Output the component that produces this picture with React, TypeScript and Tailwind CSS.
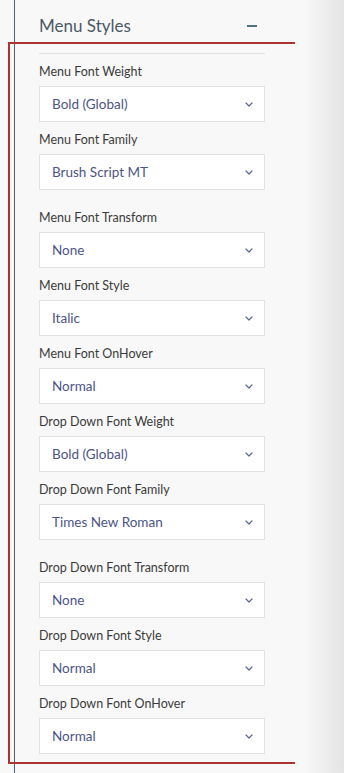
import React from "react";

interface Field {
  label: string;
  value: string;
  extra?: boolean;
}

const fields: Field[] = [
  { label: "Menu Font Weight", value: "Bold (Global)" },
  { label: "Menu Font Family", value: "Brush Script MT", extra: true },
  { label: "Menu Font Transform", value: "None" },
  { label: "Menu Font Style", value: "Italic" },
  { label: "Menu Font OnHover", value: "Normal" },
  { label: "Drop Down Font Weight", value: "Bold (Global)" },
  { label: "Drop Down Font Family", value: "Times New Roman", extra: true },
  { label: "Drop Down Font Transform", value: "None" },
  { label: "Drop Down Font Style", value: "Normal" },
  { label: "Drop Down Font OnHover", value: "Normal" },
];

const Chevron = () => (
  <svg width="8" height="5" viewBox="0 0 8 5" fill="none">
    <polyline
      points="1,1 4,4 7,1"
      stroke="#5d6699"
      strokeWidth="1.2"
      strokeLinecap="round"
      strokeLinejoin="round"
    />
  </svg>
);

const SelectField = ({ label, value, extra }: Field) => (
  <div className={extra ? "mb-[20px]" : "mb-[10px]"}>
    <div className="h-[16px] text-[12.5px] leading-[16px] text-[#3b3b3b]">{label}</div>
    <div className="mt-[6px] flex h-[36px] items-center justify-between border border-[#e2e2e2] bg-white pl-[12px] pr-[11px]">
      <span className="text-[13.5px] text-[#4c5485]">{value}</span>
      <Chevron />
    </div>
  </div>
);

export default function App() {
  return (
    <div
      className="relative h-[773px] w-[344px] overflow-hidden bg-[#f8f8f8]"
      style={{ fontFamily: "Lato, 'Open Sans', sans-serif" }}
    >
      <div className="ml-[14px] h-full border-l border-[#4d6577] pl-[24px]">
        <div className="w-[226px] pt-[14px]">
          <div className="flex h-[24px] items-center justify-between">
            <span className="text-[17px] text-[#4b5966]">Menu Styles</span>
            <span className="mr-[8px] block h-[2px] w-[10px] bg-[#4f7282]" />
          </div>
          <div className="mt-[15px] border-b border-[#e0e0e0]" />
          <div className="mt-[10px]">
            {fields.map((f) => (
              <SelectField key={f.label} {...f} />
            ))}
          </div>
        </div>
      </div>

      {/* right panel shadow */}
      <div className="pointer-events-none absolute right-0 top-0 h-full w-[40px] bg-gradient-to-r from-[#f8f8f8] to-[#e4e4e4]" />

      {/* red annotation frame */}
      <div className="pointer-events-none absolute left-[8px] top-[42px] h-[722px] w-[287px] border-b-2 border-l-2 border-t-2 border-[#ab3430]" />
    </div>
  );
}
